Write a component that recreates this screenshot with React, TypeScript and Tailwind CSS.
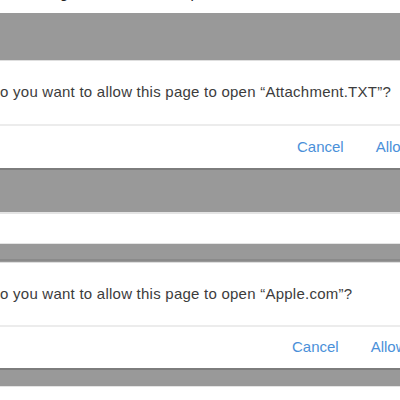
import React from 'react';

type DialogProps = {
  message: string;
  textLeft: string;
  btnLeft: string;
  textRow: string;
  btnRow: string;
};

const Dialog: React.FC<DialogProps> = ({ message, textLeft, btnLeft, textRow, btnRow }) => {
  return (
    <div className="bg-white overflow-hidden whitespace-nowrap text-[15px]">
      <div className={`${textRow} flex items-center ${textLeft} tracking-[0.24px] text-[#3c3c3c]`}>{message}</div>
      <div className="h-[2px] bg-[#ececec]" />
      <div className={`${btnRow} flex items-center gap-[32px] ${btnLeft} text-[#4a90d9]`}>
        <span>Cancel</span>
        <span>Allow</span>
      </div>
    </div>
  );
};

const App: React.FC = () => {
  return (
    <div className="w-[400px] h-[400px] overflow-hidden bg-white" style={{ fontFamily: '"Liberation Sans", Arial, sans-serif' }}>
      <div className="h-[13px] overflow-hidden relative">
        <div className="absolute left-[-2px] top-[-18px] text-[15px] whitespace-nowrap text-[#222]">
          The dialog asks the user to open it.
        </div>
      </div>
      <div className="h-[47px] bg-[#999999]" />
      <div className="h-[1px] bg-[#dedede]" />
      <Dialog
        message={'Do you want to allow this page to open \u201cAttachment.TXT\u201d?'}
        textLeft="ml-[-11px]"
        btnLeft="pl-[297px]"
        textRow="h-[63px]"
        btnRow="h-[42px]"
      />
      <div className="h-[2px] bg-[#7d7d7d]" />
      <div className="h-[42px] bg-[#999999]" />
      <div className="h-[2px] bg-[#e4e4e4]" />
      <div className="h-[29px] bg-white" />
      <div className="h-[1px] bg-[#e4e4e4]" />
      <div className="h-[15px] bg-[#999999]" />
      <div className="h-[2px] bg-[#8a8a8a]" />
      <div className="h-[1px] bg-[#999999]" />
      <div className="h-[1px] bg-[#dedede]" />
      <Dialog
        message={'Do you want to allow this page to open \u201cApple.com\u201d?'}
        textLeft="ml-[-11px]"
        btnLeft="pl-[292px]"
        textRow="h-[62px]"
        btnRow="h-[41px]"
      />
      <div className="h-[2px] bg-[#7d7d7d]" />
      <div className="h-[16px] bg-[#999999]" />
      <div className="h-[1px] bg-[#e4e4e4]" />
    </div>
  );
};

export default App;
